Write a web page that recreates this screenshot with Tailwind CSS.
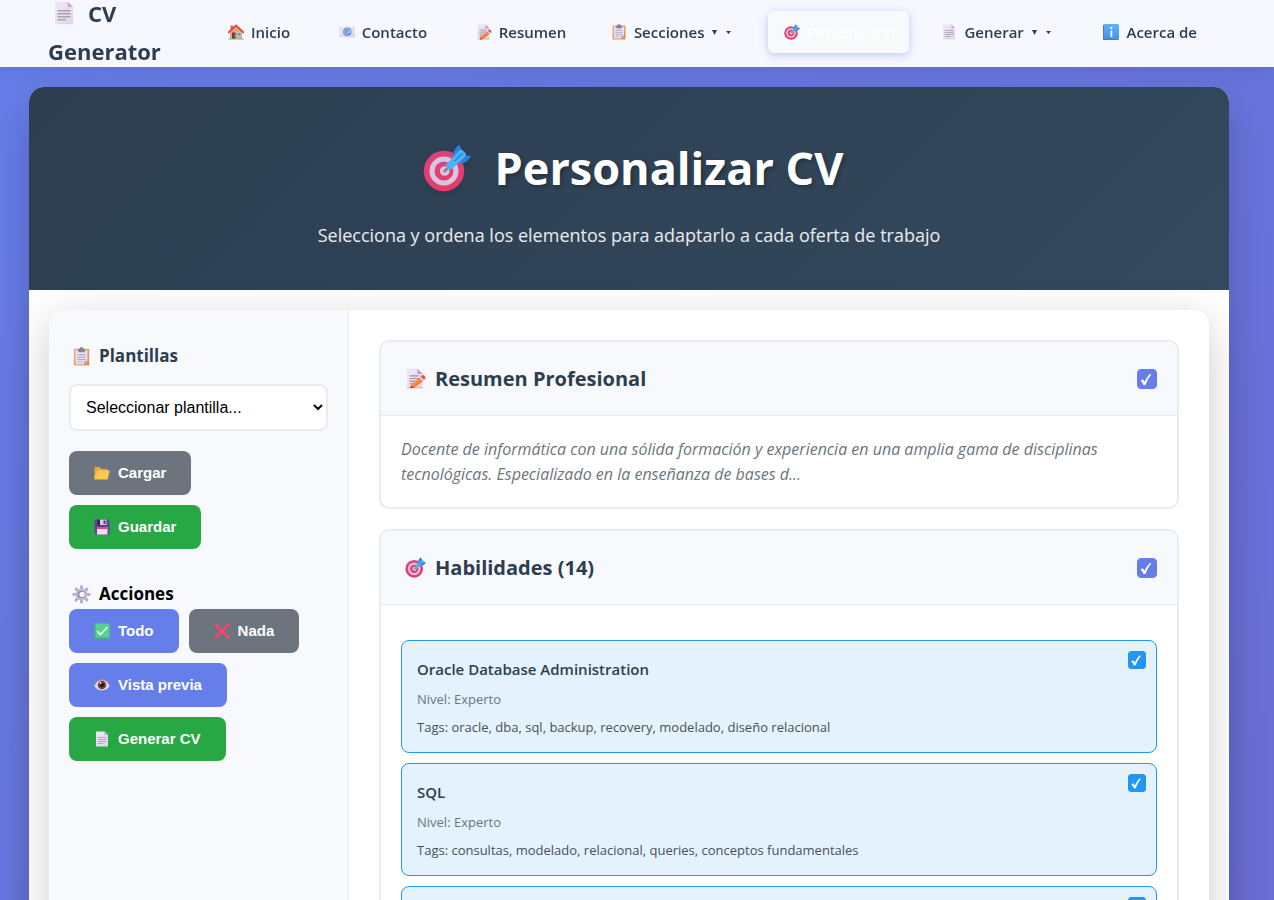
<!DOCTYPE html>
<html lang="es">
<head>
<meta charset="utf-8">
<meta name="viewport" content="width=device-width, initial-scale=1">
<title>Personalizar CV</title>
<script src="https://cdn.jsdelivr.net/npm/@tailwindcss/browser@4"></script>
</head>
<body class="min-h-screen bg-[linear-gradient(135deg,#667eea_0px,#764ba2_4800px)] font-['Open_Sans',sans-serif] text-[#2c3e50]">

<svg class="absolute size-0" aria-hidden="true">
  <defs>
    <linearGradient id="paper" x1="0" y1="0" x2="1" y2="1"><stop offset="0" stop-color="#f0e8f6"/><stop offset="1" stop-color="#e0d5ea"/></linearGradient>
    <linearGradient id="clip" x1="0" y1="0" x2="1" y2="1"><stop offset="0" stop-color="#e8b297"/><stop offset="1" stop-color="#dd8a4e"/></linearGradient>
    <linearGradient id="pink" x1="0" y1="0" x2="0" y2="1"><stop offset="0" stop-color="#d8447f"/><stop offset="1" stop-color="#e93a66"/></linearGradient>
    <linearGradient id="blue" x1="0" y1="0" x2="0" y2="1"><stop offset="0" stop-color="#5cb2fb"/><stop offset="1" stop-color="#4a8eea"/></linearGradient>
    <symbol id="page" viewBox="0 0 32 32">
      <path d="M4 1h17l7 7v23H4z" fill="url(#paper)"/><path d="M21 1v7h7z" fill="#b9aec4"/>
      <path d="M8 13h16M8 17h16M8 21h16M8 25h10" stroke="#aaa1b3" stroke-width="1.7" stroke-linecap="round"/>
    </symbol>
    <symbol id="house" viewBox="0 0 32 32">
      <path d="M5 3h5v9H5z" fill="#b87452"/><path d="M4 15 16 4l12 11v15H4z" fill="#e2aa73"/>
      <path d="M8 17h7v13H8z" fill="#704045"/><circle cx="13.500" cy="24" r="1" fill="#e2aa73"/>
      <path d="M18 17h8v7h-8z" fill="#42a8ec" stroke="#f4ddc3"/>
      <path d="M1 17 16 3l15 14" fill="none" stroke="#e9433f" stroke-width="3.500" stroke-linecap="round" stroke-linejoin="round"/>
      <path d="M1 29h30v2H1z" fill="#54c98c"/>
    </symbol>
    <symbol id="mail" viewBox="0 0 32 32">
      <path d="M0 5h32v22H0z" fill="url(#paper)"/><path d="m0 27 12-12M32 27 20 15M0 5l11 9M32 5l-11 9" stroke="#cfc3dc"/>
      <circle cx="16.500" cy="15.500" r="8.500" fill="#3f80d6"/><circle cx="16.500" cy="15.500" r="3" fill="none" stroke="#cfe0fa" stroke-width="1.800"/>
      <path d="M20 12v5c0 2 3 2 3-1.500a6.500 6.500 0 1 0-3.500 5.500" fill="none" stroke="#cfe0fa" stroke-width="1.500"/>
    </symbol>
    <symbol id="memo" viewBox="0 0 32 32">
      <path d="M3 1h17l7 7v23H3z" fill="url(#paper)"/><path d="M3 29h24v2H3z" fill="#c9bdd6"/><path d="M19 1v8h8z" fill="#b3a8be"/>
      <path d="M7 12h14M7 16h14M7 20h9M7 24h6" stroke="#9a91a3" stroke-width="1.700"/>
      <path d="m9 26 13-11 5 5-12 10-7 1z" fill="#fb7b3c"/><path d="m22 15 2-2 5 5-2 2z" fill="#d7c7de"/><path d="m24 13 2-2c2-1 6 3 5 5l-2 2z" fill="#f4484b"/><path d="m8 31 2-4 3 3z" fill="#694b52"/><path d="m11 27 12-10" stroke="#ffa257" stroke-width="1.500"/>
    </symbol>
    <symbol id="clipboard" viewBox="0 0 32 32">
      <path d="M3 3h26v28H3z" fill="url(#clip)"/><path d="M6 6h20v17l-6 6H6z" fill="#e9dff1"/><path d="M26 23h-6v6z" fill="#bbaec7"/>
      <path d="M10 3h3a3 3 0 0 1 6 0h3v4l-2 2h-8l-2-2z" fill="#8e8396"/>
      <path d="M9 13h14M9 17h14M9 21h14M9 25h8" stroke="#aaa1b3" stroke-width="1.500"/>
    </symbol>
    <symbol id="target" viewBox="0 0 32 32">
      <circle cx="14" cy="18" r="13.500" fill="url(#pink)"/><circle cx="14" cy="18" r="9.700" fill="#d6c5df"/><circle cx="14" cy="18" r="6.300" fill="url(#pink)"/><circle cx="14.500" cy="18" r="3.200" fill="#d6c5df"/>
      <path d="m14.500 18 5-5" stroke="#8f7d9e" stroke-width="2" stroke-linecap="round"/>
      <path d="M20 8c0-3 2-6 4-7.500L26.500 5 23 10zM23 12l4-4.500 5 .5c-1.500 3-4 5-7 5z" fill="#2b7fe4"/>
      <path d="m16 13 8.500-9c1.500-1 5 2.500 4 4l-9 8.500c-3 1.500-5.500-1-3.500-3.500z" fill="#4bb5f3"/><path d="m21 11.500 5.500-5.500" stroke="#2b7fe4" stroke-width="1"/>
    </symbol>
    <symbol id="info" viewBox="0 0 32 32">
      <rect x="0" y="0" width="32" height="32" rx="3" fill="url(#blue)"/><path d="M1 2v29h29" fill="none" stroke="#397bd9" stroke-width="2"/>
      <circle cx="16.500" cy="8" r="2.300" fill="#fff"/><path d="M15 13h3.500v13H15z" fill="#fff"/>
    </symbol>
    <symbol id="folder" viewBox="0 0 32 32">
      <path d="M1 4h10l4 4h12v7H6L1 28z" fill="#eda63a"/><path d="M7 11h24.500l-4 17q-.5 1-2 1H1V23z" fill="#fdc94d"/>
    </symbol>
    <symbol id="floppy" viewBox="0 0 32 32">
      <path d="M1 1h28l2 3v27H4l-3-3z" fill="#60459a"/><path d="M7 1h18v12H7z" fill="#322451"/><path d="M12 1h13v11H12z" fill="#dacfe6"/><path d="M19 3h4v7h-4z" fill="#4a376f"/>
      <path d="M6 16h21v15H6z" fill="#f0dff5"/><path d="M6 16h21v4H6z" fill="#f24265"/>
    </symbol>
    <symbol id="gear" viewBox="0 0 32 32">
      <g stroke="#b9accb" stroke-width="5" stroke-linecap="round"><path d="M16 3v26M3 16h26M7 7l18 18M25 7 7 25"/></g>
      <circle cx="16" cy="16" r="10" fill="#c6bad6"/><circle cx="16" cy="16" r="6.500" fill="#9488a6"/><circle cx="17" cy="16" r="4.500" fill="#f8f9fc"/>
    </symbol>
    <symbol id="tick" viewBox="0 0 32 32">
      <rect x="1" y="1" width="30" height="30" rx="2" fill="#55d28d"/><path d="M2 2v28h28" fill="none" stroke="#3bac70" stroke-width="2"/><path d="m7 17 6 6L26 9" fill="none" stroke="#fff" stroke-width="3" stroke-linecap="round" stroke-linejoin="round"/>
    </symbol>
    <symbol id="cross" viewBox="0 0 32 32"><path d="m3 3 26 26M29 3 3 29" stroke="#f8436b" stroke-width="5" stroke-linecap="round"/></symbol>
    <symbol id="eye" viewBox="0 0 32 32">
      <path d="M1 17C5 1 27 1 31 17 27 30 5 30 1 17z" fill="#e2d8e6"/><path d="M1 16C6 2 26 2 31 16" fill="none" stroke="#9d7d7b" stroke-width="2"/><circle cx="16" cy="16" r="8.500" fill="#7b4340"/><circle cx="16" cy="16" r="4.500" fill="#2b1a25"/><circle cx="13" cy="12" r="2" fill="#f4e7ea"/>
    </symbol>
    <symbol id="check" viewBox="0 0 20 20"><path d="M3.500 11.500 5.800 10.300 7.600 12.800C9 9.500 11 6.800 13 5L14.500 5.300C12 8.300 9.800 12 8.600 15.800L6.600 16.200C6 14.400 5 12.800 3.500 11.500z" fill="#fff"/></symbol>
  </defs>
</svg>

<nav class="fixed inset-x-0 top-0 z-10 flex h-[67px] items-center bg-white/95 pr-[65px] pl-12 shadow-[0_2px_20px_rgba(0,0,0,0.1)]">
  <a href="#" class="w-[164px] shrink-0 pb-[3px] text-[22px] leading-[38px] font-bold">
    <span class="flex items-center gap-3"><svg class="ml-1 size-6"><use href="#page"/></svg>CV</span>
    <span class="block">Generator</span>
  </a>
  <ul class="flex grow items-center justify-between pb-[3px] text-[15px] font-semibold whitespace-nowrap">
    <li><a href="#" class="flex h-[42px] items-center gap-[7px] rounded-lg pr-3 pl-4"><svg class="size-4"><use href="#house"/></svg>Inicio</a></li>
    <li><a href="#" class="flex h-[42px] items-center gap-[7px] rounded-lg pr-3 pl-4"><svg class="size-4"><use href="#mail"/></svg>Contacto</a></li>
    <li><a href="#" class="flex h-[42px] items-center gap-[7px] rounded-lg pr-3 pl-4"><svg class="size-4"><use href="#memo"/></svg>Resumen</a></li>
    <li><a href="#" class="flex h-[42px] items-center gap-[7px] rounded-lg pr-4 pl-3"><svg class="size-4"><use href="#clipboard"/></svg>Secciones
      <svg class="size-[7px]" viewBox="0 0 7 7"><path d="M1 1h5L3.500 6z" fill="currentColor"/></svg><svg class="ml-px h-[3px] w-[5px]" viewBox="0 0 5 3"><path d="M0 0h5L2.500 3z" fill="currentColor"/></svg></a></li>
    <li><a href="#" aria-current="page" class="flex h-[42px] items-center gap-[7px] rounded-md bg-[#f8f9fa] pr-3 pl-4 text-white shadow-[0_2px_10px_rgba(102,126,234,0.4)]"><svg class="size-4"><use href="#target"/></svg>Personalizar</a></li>
    <li><a href="#" class="flex h-[42px] items-center gap-[7px] rounded-lg pr-4 pl-3"><svg class="size-4"><use href="#page"/></svg>Generar
      <svg class="size-[7px]" viewBox="0 0 7 7"><path d="M1 1h5L3.500 6z" fill="currentColor"/></svg><svg class="ml-px h-[3px] w-[5px]" viewBox="0 0 5 3"><path d="M0 0h5L2.500 3z" fill="currentColor"/></svg></a></li>
    <li><a href="#" class="flex h-[42px] items-center gap-[7px] rounded-lg pr-3 pl-4"><svg class="size-4"><use href="#info"/></svg>Acerca de</a></li>
  </ul>
</nav>

<div class="pt-[87px] pr-4">
<div class="mx-auto max-w-[1200px] rounded-t-[15px] bg-white shadow-[0_20px_40px_rgba(0,0,0,0.2)]">
  <header class="flex flex-col items-center rounded-t-[15px] bg-[linear-gradient(135deg,#2c3e50,#34495e)] pt-10 pb-[38px] text-white">
    <h1 class="flex items-center gap-6 pl-2 text-[45px] leading-[82px] font-bold text-shadow-[2px_2px_4px_rgba(0,0,0,0.3)]"><svg class="size-12 drop-shadow-md"><use href="#target"/></svg>Personalizar CV</h1>
    <p class="mt-2.5 text-[18px] leading-[33px] text-white/90">Selecciona y ordena los elementos para adaptarlo a cada oferta de trabajo</p>
  </header>

  <div class="p-5">
  <div class="flex rounded-[15px] bg-white shadow-[0_10px_40px_rgba(0,0,0,0.2)]">
    <aside class="w-[300px] shrink-0 rounded-l-[15px] border-r border-[#e9ecef] bg-[#f8f9fc] px-5 pt-[31px]">
      <h2 class="flex items-center gap-2 text-[17px] leading-[30px] font-bold"><svg class="ml-[3px] size-[19px]"><use href="#clipboard"/></svg><label for="plantilla">Plantillas</label></h2>
      <select id="plantilla" class="mt-[13px] h-[47px] w-full rounded-lg border-2 border-[#e9ecef] bg-white pl-[11px] font-['Liberation_Sans',sans-serif] text-base text-black"><option>Seleccionar plantilla...</option></select>
      <div class="mt-5 flex flex-col items-start gap-2.5 font-['Liberation_Sans',sans-serif] text-[15px] font-bold text-white">
        <button type="button" class="flex h-11 items-center gap-2 rounded-lg bg-[#6c757d] px-[25px]"><svg class="size-4"><use href="#folder"/></svg>Cargar</button>
        <button type="button" class="flex h-11 items-center gap-2 rounded-lg bg-[#28a745] px-[25px]"><svg class="size-4"><use href="#floppy"/></svg>Guardar</button>
      </div>
      <h2 class="mt-[30px] flex items-center gap-2 text-[17px] leading-[30px] font-bold text-black"><svg class="ml-[3px] size-[19px]"><use href="#gear"/></svg>Acciones</h2>
      <div class="flex flex-wrap items-start gap-2.5 font-['Liberation_Sans',sans-serif] text-[15px] font-bold text-white">
        <button type="button" class="flex h-11 items-center gap-2 rounded-lg bg-[#667eea] px-[25px]"><svg class="size-4"><use href="#tick"/></svg>Todo</button>
        <button type="button" class="flex h-11 items-center gap-2 rounded-lg bg-[#6c757d] px-[25px]"><svg class="size-4"><use href="#cross"/></svg>Nada</button>
        <button type="button" class="flex h-11 items-center gap-2 rounded-lg bg-[#667eea] px-[25px]"><svg class="size-4"><use href="#eye"/></svg>Vista previa</button>
        <button type="button" class="flex h-11 items-center gap-2 rounded-lg bg-[#28a745] px-[25px]"><svg class="size-4"><use href="#page"/></svg>Generar CV</button>
      </div>
    </aside>

    <main class="flex min-w-0 grow flex-col gap-5 p-[30px]">
      <section class="overflow-hidden rounded-[10px] border-2 border-[#e9ecef]">
        <div class="flex h-[74px] items-center border-b border-[#e9ecef] bg-[#f8f9fc] px-5">
          <h2 class="flex grow items-center gap-2 text-[20px] font-bold"><svg class="ml-1 mr-px size-[21px]"><use href="#memo"/></svg><label for="s1">Resumen Profesional</label></h2>
          <span class="grid"><input id="s1" type="checkbox" checked class="peer col-start-1 row-start-1 size-5 appearance-none rounded border border-[#667eea] bg-white checked:bg-[#667eea]"><svg class="pointer-events-none invisible col-start-1 row-start-1 size-5 peer-checked:visible"><use href="#check"/></svg></span>
        </div>
        <p class="px-5 pt-[21px] pb-5 text-base leading-[25px] text-[#6c757d] italic">Docente de informática con una sólida formación y experiencia en una amplia gama de disciplinas tecnológicas. Especializado en la enseñanza de bases d...</p>
      </section>

      <section class="overflow-hidden rounded-[10px] border-2 border-[#e9ecef]">
        <div class="flex h-[74px] items-center border-b border-[#e9ecef] bg-[#f8f9fc] px-5">
          <h2 class="flex grow items-center gap-2 text-[20px] font-bold"><svg class="ml-1 mr-px size-[21px]"><use href="#target"/></svg><label for="s2">Habilidades (14)</label></h2>
          <span class="grid"><input id="s2" type="checkbox" checked class="peer col-start-1 row-start-1 size-5 appearance-none rounded border border-[#667eea] bg-white checked:bg-[#667eea]"><svg class="pointer-events-none invisible col-start-1 row-start-1 size-5 peer-checked:visible"><use href="#check"/></svg></span>
        </div>
        <div class="flex flex-col gap-2.5 px-5 pt-[35px] pb-5">
          <article class="relative flex flex-col gap-[7px] rounded-lg border border-[#2196f3] bg-[#e3f2fd] px-[15px] pt-[15px] pb-[14px]">
            <h3 class="text-[15px] leading-[26px] font-semibold"><label for="h1">Oracle Database Administration</label></h3>
            <p class="text-[13px] leading-[21px] text-[#6c757d]">Nivel: Experto</p>
            <p class="text-[13px] leading-[21px] text-[#495057]">Tags: oracle, dba, sql, backup, recovery, modelado, diseño relacional</p>
            <span class="absolute top-2.5 right-2.5 grid"><input id="h1" type="checkbox" checked class="peer col-start-1 row-start-1 size-[18px] appearance-none rounded-[3px] border border-[#2196f3] bg-white checked:bg-[#2196f3]"><svg class="pointer-events-none invisible col-start-1 row-start-1 size-[18px] peer-checked:visible"><use href="#check"/></svg></span>
          </article>
          <article class="relative flex flex-col gap-[7px] rounded-lg border border-[#2196f3] bg-[#e3f2fd] px-[15px] pt-[15px] pb-[14px]">
            <h3 class="text-[15px] leading-[26px] font-semibold"><label for="h2">SQL</label></h3>
            <p class="text-[13px] leading-[21px] text-[#6c757d]">Nivel: Experto</p>
            <p class="text-[13px] leading-[21px] text-[#495057]">Tags: consultas, modelado, relacional, queries, conceptos fundamentales</p>
            <span class="absolute top-2.5 right-2.5 grid"><input id="h2" type="checkbox" checked class="peer col-start-1 row-start-1 size-[18px] appearance-none rounded-[3px] border border-[#2196f3] bg-white checked:bg-[#2196f3]"><svg class="pointer-events-none invisible col-start-1 row-start-1 size-[18px] peer-checked:visible"><use href="#check"/></svg></span>
          </article>
          <article class="relative min-h-28 rounded-lg border border-[#2196f3] bg-[#e3f2fd] p-[15px]">
            <span class="absolute top-2.5 right-2.5 grid"><input type="checkbox" checked class="peer col-start-1 row-start-1 size-[18px] appearance-none rounded-[3px] border border-[#2196f3] bg-white checked:bg-[#2196f3]"><svg class="pointer-events-none invisible col-start-1 row-start-1 size-[18px] peer-checked:visible"><use href="#check"/></svg></span>
          </article>
        </div>
      </section>
    </main>
  </div>
  </div>
</div>
</div>
</body>
</html>
